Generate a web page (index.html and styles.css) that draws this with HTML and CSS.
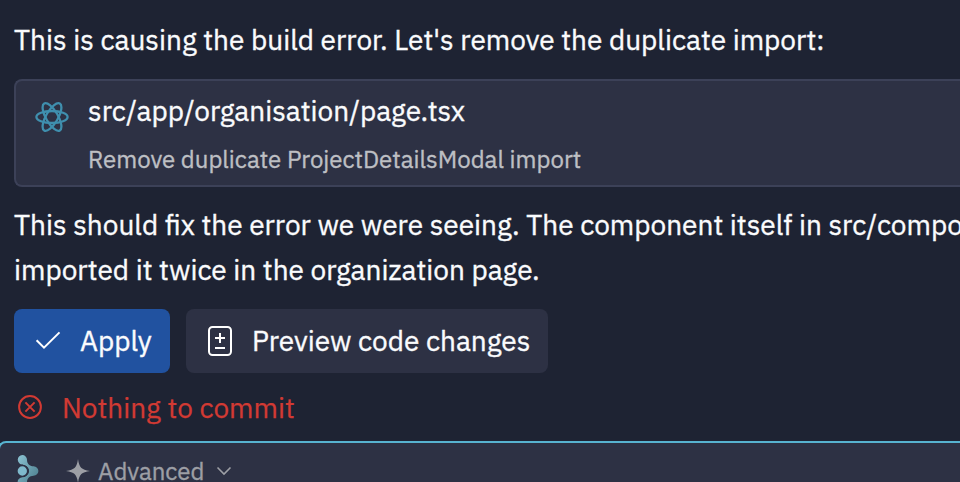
FILE: index.html
```
<!DOCTYPE html>
<html lang="en">
<head>
<meta charset="utf-8">
<title>Build error fix</title>
<link rel="stylesheet" href="styles.css">
</head>
<body>
<main class="chat">
  <p class="message intro">This is causing the build error. Let's remove the duplicate import:</p>
  <section class="file-card">
    <svg class="react-icon" viewBox="0 0 34 32" fill="none" stroke="#3f8fae" stroke-width="2.3">
      <ellipse cx="17" cy="16" rx="15.600" ry="6"/>
      <ellipse cx="17" cy="16" rx="15.600" ry="6" transform="rotate(60 17 16)"/>
      <ellipse cx="17" cy="16" rx="15.600" ry="6" transform="rotate(120 17 16)"/>
    </svg>
    <div class="file-info">
      <div class="file-name">src/app/organisation/page.tsx</div>
      <div class="file-note">Remove duplicate ProjectDetailsModal import</div>
    </div>
  </section>
  <p class="message summary">This should fix the error we were seeing. The component itself in src/compo<br>imported it twice in the organization page.</p>
  <div class="actions">
    <button class="btn apply">
      <svg class="check-icon" viewBox="0 0 28 24" fill="none" stroke="#fff" stroke-width="2"><path d="M2.600 11.200 10 18.600 25.500 3.400"/></svg>
      <span>Apply</span>
    </button>
    <button class="btn preview">
      <svg class="diff-icon" viewBox="0 0 24 30" fill="none" stroke="#fff" stroke-width="2"><rect x="1" y="1" width="22" height="28" rx="3.5"/><path d="M7 12h10M12 7v10M7 22h10"/></svg>
      <span>Preview code changes</span>
    </button>
  </div>
  <div class="status">
    <svg class="error-icon" viewBox="0 0 24 24" fill="none" stroke="#d23a33" stroke-width="2"><circle cx="12" cy="12" r="10.900"/><path d="m7.400 7.400 9.200 9.200m0-9.200-9.200 9.200"/></svg>
    <span>Nothing to commit</span>
  </div>
</main>
<footer class="composer">
  <svg class="brand-icon" viewBox="0 0 22 32">
    <defs><linearGradient id="brand" x1="0" y1="0" x2="1" y2="1"><stop offset="0" stop-color="#8cc4d4"/><stop offset="1" stop-color="#457685"/></linearGradient></defs>
    <path fill="url(#brand)" d="M5.300 1a4.700 4.700 0 0 1 4.700 4.700c0 4 2.500 6.300 6.500 6.600 2.800.4 4.900 2.200 4.900 4.700s-2.100 4.300-4.900 4.700c-4 .3-6.500 2.600-6.500 6.600a4.700 4.700 0 0 1-9.400 0c0-3 2-4.500 5-5.200 3.700-.8 6.400-2.500 6.400-6.100s-2.700-5.700-6.400-6.600A4.700 4.700 0 0 1 5.300 1Z"/>
    <circle cx="5.300" cy="17" r="5.500" fill="#7fb9cc" stroke="#2d3144" stroke-width="1.700"/>
  </svg>
  <svg class="spark-icon" viewBox="0 0 24 24" fill="#9d9fa5"><path d="M12 0c1.300 8.500 3.200 10.700 12 12-8.800 1.300-10.700 3.500-12 12-1.300-8.500-3.200-10.700-12-12C8.800 10.700 10.700 8.500 12 0Z"/></svg>
  <span class="mode">Advanced</span>
  <svg class="chevron-icon" viewBox="0 0 16 10" fill="none" stroke="#9d9fa5" stroke-width="1.600"><path d="m1.500 1.500 6.500 6.500 6.500-6.500"/></svg>
</footer>
</body>
</html>
```
FILE: styles.css
```
* { box-sizing: border-box; }
body {
  margin: 0;
  width: 960px;
  height: 482px;
  overflow: hidden;
  background: #1e2333;
  color: #fafbfd;
  font-family: "IBM Plex Sans", "Noto Sans", sans-serif;
  font-size: 28px;
  white-space: nowrap;
  -webkit-text-stroke: 0.35px currentColor;
}
svg { display: block; flex: none; }
.chat { display: flow-root; height: 441px; padding-left: 14px; }
.message { margin: 0; line-height: 45px; }
.intro { margin-top: 17px; }
.file-card {
  display: flex;
  height: 108px;
  margin-top: 17px;
  padding-left: 19px;
  background: #2d3144;
  border: 2px solid #3c4158;
  border-right: 0;
  border-radius: 8px 0 0 8px;
}
.react-icon { width: 34px; height: 32px; margin-top: 20px; }
.file-info { margin-left: 19px; }
.file-name { height: 44px; margin-top: 8px; line-height: 44px; }
.file-note { height: 40px; margin-top: 6px; line-height: 40px; font-size: 24px; color: #bdbfc3; }
.summary { margin-top: 15px; }
.actions { display: flex; gap: 16px; margin-top: 17px; }
.btn {
  display: flex;
  align-items: center;
  height: 64px;
  padding: 0 0 2px;
  border: 0;
  border-radius: 8px;
  color: #fafbfd;
  font: inherit;
  -webkit-text-stroke: inherit;
}
.apply { width: 156px; padding-left: 20px; background: #2152a0; }
.preview { width: 362px; padding-left: 22px; background: #2d3144; }
.check-icon { width: 28px; height: 24px; margin: 2px 18px 0 0; }
.diff-icon { width: 24px; height: 30px; margin: 2px 20px 0 0; }
.status { display: flex; align-items: center; height: 44px; margin-top: 12px; padding-left: 4px; color: #d23a33; -webkit-text-stroke-width: 0.25px; }
.error-icon { width: 24px; height: 24px; margin: -1px 20px 0 0; }
.composer {
  display: flex;
  height: 41px;
  overflow: hidden;
  margin-left: -2px;
  padding-left: 17px;
  background: #2d3144;
  border: 2px solid #57b3d0;
  border-width: 2px 0 0 2px;
  border-radius: 8px 0 0 0;
  color: #9d9fa5;
  font-size: 24px;
}
.brand-icon { width: 22px; height: 32px; margin-top: 11px; }
.spark-icon { width: 24px; height: 24px; margin: 16px 8px 0 27px; }
.mode { margin-top: 8px; line-height: 40px; }
.chevron-icon { width: 16px; height: 10px; margin: 23px 0 0 12px; }
```
